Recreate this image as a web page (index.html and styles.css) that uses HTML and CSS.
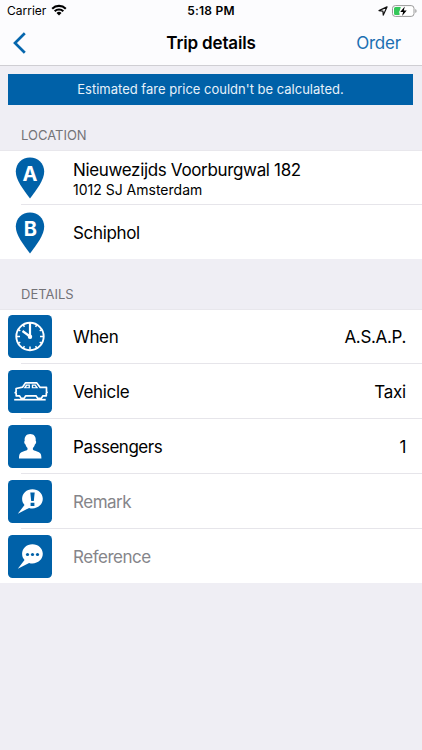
FILE: index.html
```
<!DOCTYPE html>
<html lang="en">
<head>
<meta charset="utf-8">
<title>Trip details</title>
<link rel="stylesheet" href="styles.css">
</head>
<body>
<header class="top">
  <div class="status">
    <div class="carrier"><span class="carrier-name">Carrier</span>
      <svg class="wifi" width="16" height="12" viewBox="0 0 16 12"><g fill="none" stroke="#000" stroke-width="2.1"><path d="M1.2 4.7a9.7 9.7 0 0 1 13.6 0"/><path d="M3.7 7.3a6.1 6.1 0 0 1 8.6 0"/></g><path d="M8 11.5 5.5 9a3.6 3.6 0 0 1 5 0z"/></svg>
    </div>
    <span class="time">5:18 PM</span>
    <div class="indicators">
      <svg width="10" height="10" viewBox="0 0 10 10"><path d="M9 .9 1 4.6l3.9.5.4 4z" fill="none" stroke="#111" stroke-width="1.2" stroke-linejoin="round"/></svg>
      <svg width="25" height="12" viewBox="0 0 25 12"><rect x=".5" y=".6" width="21.5" height="10.8" rx="2.8" fill="#fff" stroke="#999"/><path d="M3.5 2H8.800L7.500 6.500V10H3.500A1.500 1.500 0 0 1 2 8.500v-5A1.500 1.500 0 0 1 3.500 2z" fill="#34c759"/><path d="M12.800 1.600 8.200 6.900h2.900l-1 4 4.600-5.400h-2.900z" stroke="#fff" stroke-width="1.400" paint-order="stroke"/><path d="M23.300 4v4q1.300-.7 1.300-2t-1.300-2z" fill="#999"/></svg>
    </div>
  </div>
  <nav class="nav">
    <svg class="back" width="13" height="22" viewBox="0 0 13 22"><path d="M11.800 1.300 2 11l9.800 9.700" fill="none" stroke="#0566ad" stroke-width="2.700"/></svg>
    <h1 class="title">Trip details</h1>
    <a class="order">Order</a>
  </nav>
</header>
<main>
  <div class="banner"><span>Estimated fare price couldn't be calculated.</span></div>
  <h2 class="heading heading-location">LOCATION</h2>
  <section class="group">
    <div class="row">
      <svg class="pin" width="30" height="42" viewBox="0 0 30 42"><path d="M15 .6C7 .6.800 6.700.800 14.600c0 8.200 7.200 18 14.200 26.800 7-8.800 14.200-18.600 14.200-26.800C29.200 6.700 23 .6 15 .6z" fill="#0061a8"/><text class="pin-letter" x="15" y="23.500">A</text></svg>
      <div class="address"><span class="label street">Nieuwezijds Voorburgwal 182</span><span class="city">1012 SJ Amsterdam</span></div>
    </div>
    <div class="row">
      <svg class="pin" width="30" height="42" viewBox="0 0 30 42"><path d="M15 .6C7 .6.800 6.700.800 14.600c0 8.200 7.200 18 14.200 26.800 7-8.800 14.200-18.600 14.200-26.800C29.200 6.700 23 .6 15 .6z" fill="#0061a8"/><text class="pin-letter" x="15.400" y="23.500">B</text></svg>
      <span class="label">Schiphol</span>
    </div>
  </section>
  <h2 class="heading heading-details">DETAILS</h2>
  <section class="group">
    <div class="row">
      <svg class="tile" width="44" height="43" viewBox="0 0 44 43"><rect width="44" height="43" rx="4.500" fill="#0061a8"/><g fill="none" stroke="#fff" stroke-width="1.900"><circle cx="22" cy="21.500" r="13.700"/><path d="M22 8v13.500L14.500 16" stroke-width="2.200"/><path d="M22 31.500v3M9 21.500h3M32 21.500h3M15.300 33.200l1.100-2M28.700 33.200l-1.100-2M10.300 28.300l2-1.100M33.700 28.300l-2-1.100M10.300 14.700l2 1.100M33.700 14.700l-2 1.100M15.300 9.800l1.100 2M28.700 9.800l-1.100 2" stroke-width="1.500"/></g><circle cx="22" cy="21.700" r="2.200" fill="#fff"/></svg>
      <span class="label">When</span><span class="value">A.S.A.P.</span>
    </div>
    <div class="row">
      <svg class="tile" width="44" height="43" viewBox="0 0 44 43"><rect width="44" height="43" rx="4.500" fill="#0061a8"/><g fill="none" stroke="#fff" stroke-width="1.700" stroke-linejoin="round"><path d="M11.600 25.800H8.200v-2.500l-1-.6.900-.8v-3.400l6.400-1.300 3.100-4.400h11l3.600 4.600h6.300v4.400l.6.600-.8.700v2.700h-3.400l-1.600 2.600h-3.600l-1.700-2.600H17.600l-1.500 2.600h-3z"/><path d="M6.200 29.700h31.500"/></g><path d="M15.700 18.300l2.400-3.700h3.800v3.700zM23.800 14.600h3.800l2.700 3.700h-6.500z" fill="#fff"/><path d="M18 17.200l1.200-1.500h1.400v1.500zM25.100 15.700h1.700l1.100 1.500h-2.800z" fill="#0061a8"/></svg>
      <span class="label">Vehicle</span><span class="value taxi">Taxi</span>
    </div>
    <div class="row">
      <svg class="tile" width="44" height="43" viewBox="0 0 44 43"><rect width="44" height="43" rx="4.500" fill="#0061a8"/><path d="M22.200 9c-4 0-6 2.900-5.500 6.800-.9.600-.4 3.300.8 3.700.4 1.600 1 2.700 2 3.500v1.600c-.4 1.300-6.500 1.900-7.700 4.200-.7 1.400-.8 3.200-.8 4.800h22.400c0-1.600-.1-3.400-.8-4.800-1.200-2.300-7.300-2.900-7.700-4.200V23c1-.8 1.600-1.900 2-3.500 1.200-.4 1.700-3.100.8-3.700.5-3.900-1.500-6.800-5.500-6.800z" fill="#fff"/></svg>
      <span class="label tight">Passengers</span><span class="value">1</span>
    </div>
    <div class="row">
      <svg class="tile" width="44" height="43" viewBox="0 0 44 43"><rect width="44" height="43" rx="4.500" fill="#0061a8"/><path d="M24.400 9.200c-5.800 0-10.300 4.200-10.300 9.600 0 2.500.8 4.500 2.400 6.200L9.800 33.800l11.300-5.900c1 .4 2.100.5 3.300.5 5.900 0 10.400-4.200 10.400-9.600s-4.500-9.600-10.400-9.600z" fill="#fff"/><path d="M22.300 12.500h4.400l-.9 8.600h-2.600zM22.600 22.800h3.800v3.300h-3.800z" fill="#0061a8"/></svg>
      <span class="label muted tight">Remark</span>
    </div>
    <div class="row">
      <svg class="tile" width="44" height="43" viewBox="0 0 44 43"><rect width="44" height="43" rx="4.500" fill="#0061a8"/><path d="M24.400 9.200c-5.800 0-10.300 4.200-10.300 9.600 0 2.500.8 4.500 2.400 6.200L9.800 33.800l11.300-5.900c1 .4 2.100.5 3.300.5 5.900 0 10.400-4.200 10.400-9.600s-4.500-9.600-10.400-9.600z" fill="#fff"/><g fill="#0061a8"><circle cx="19.500" cy="19.500" r="1.600"/><circle cx="24.500" cy="19.500" r="1.600"/><circle cx="29.500" cy="19.500" r="1.600"/></g></svg>
      <span class="label muted tight">Reference</span>
    </div>
  </section>
</main>
</body>
</html>
```
FILE: styles.css
```
* { box-sizing: border-box; }
body {
  margin: 0;
  height: 750px;
  overflow: hidden;
  background: #efeef4;
  color: #000;
  font-family: Inter, "Liberation Sans", sans-serif;
}
svg { display: block; flex: none; }
h1, h2 { margin: 0; font-weight: 400; }
.top { height: 66px; background: #fcfcfe; border-bottom: 1px solid #cfced3; }
.status {
  display: grid;
  grid-template-columns: 1fr auto 1fr;
  align-items: center;
  height: 21px;
  padding: 0 7px;
  font-size: 12px;
}
.carrier { display: flex; align-items: center; gap: 5px; }
.wifi { margin-top: -1px; }
.time { font-weight: 600; letter-spacing: .2px; }
.indicators { display: flex; justify-content: flex-end; align-items: center; gap: 4px; margin-right: -2px; }
.nav {
  display: grid;
  grid-template-columns: 1fr auto 1fr;
  align-items: center;
  height: 44px;
  padding: 0 21px 0 13px;
}
.title { margin-left: 8px; font-size: 17px; font-weight: 600; letter-spacing: -.15px; }
.order { justify-self: end; color: #1a6fb2; font-size: 17px; letter-spacing: -.2px; }
.banner {
  display: flex;
  align-items: center;
  justify-content: center;
  height: 31px;
  margin: 8px 9px 0 8px;
  padding-bottom: 2px;
  background: #0061a8;
  color: #e6f1fa;
  font-size: 13px;
}
.heading {
  display: flex;
  align-items: flex-end;
  padding: 0 0 7px 21px;
  color: #737378;
  font-size: 13px;
  line-height: 16px;
}
.heading-location { height: 45px; }
.heading-details { height: 50px; }
.group { border-top: 1px solid #e8e7ec; background: #fff; }
.row {
  display: flex;
  align-items: center;
  height: 55px;
  padding: 0 16px 0 8px;
  background: linear-gradient(#e6e5ea, #e6e5ea) 21px 100% / 100% 1px no-repeat;
}
.group .row:first-child { height: 54px; padding-bottom: 1px; }
.row:last-child { height: 54px; padding-top: 1px; background: none; }
.pin { margin: 0 28px 0 7px; }
.pin-letter { fill: #fff; font-size: 20px; font-weight: 700; text-anchor: middle; }
.tile { margin-right: 21px; }
.address { display: flex; flex-direction: column; padding-top: 2px; }
.label, .value { font-size: 17px; line-height: 22px; letter-spacing: -.34px; white-space: nowrap; }
.tight { letter-spacing: -.48px; }
.city { font-size: 14px; line-height: 18px; }
.value { margin-left: auto; }
.taxi { letter-spacing: -.2px; }
.muted { color: #85858a; }
```
